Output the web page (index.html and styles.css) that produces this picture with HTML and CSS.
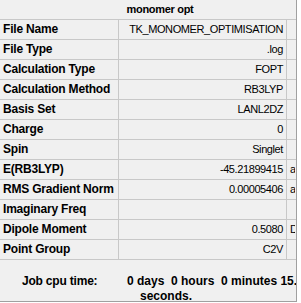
FILE: index.html
```html
<!DOCTYPE html>
<html lang="en">
<head>
  <meta charset="UTF-8">
  <title>monomer opt</title>
  <link rel="stylesheet" href="styles.css">
</head>
<body>
  <div class="panel">
    <div class="title">monomer opt</div>
    <div class="grid">
      <div class="row"><span class="label">File Name</span><span class="value">TK_MONOMER_OPTIMISATION</span><span class="unit"></span></div>
      <div class="row"><span class="label">File Type</span><span class="value">.log</span><span class="unit"></span></div>
      <div class="row"><span class="label">Calculation Type</span><span class="value">FOPT</span><span class="unit"></span></div>
      <div class="row"><span class="label">Calculation Method</span><span class="value">RB3LYP</span><span class="unit"></span></div>
      <div class="row"><span class="label">Basis Set</span><span class="value">LANL2DZ</span><span class="unit"></span></div>
      <div class="row"><span class="label">Charge</span><span class="value">0</span><span class="unit"></span></div>
      <div class="row"><span class="label">Spin</span><span class="value">Singlet</span><span class="unit"></span></div>
      <div class="row"><span class="label">E(RB3LYP)</span><span class="value">-45.21899415</span><span class="unit">a.u.</span></div>
      <div class="row"><span class="label">RMS Gradient Norm</span><span class="value">0.00005406</span><span class="unit">a.u.</span></div>
      <div class="row"><span class="label">Imaginary Freq</span><span class="value"></span><span class="unit"></span></div>
      <div class="row"><span class="label">Dipole Moment</span><span class="value">0.5080</span><span class="unit">Debye</span></div>
      <div class="row"><span class="label">Point Group</span><span class="value">C2V</span><span class="unit"></span></div>
    </div>
    <div class="footer">
      <span class="job-label">Job cpu time:</span>
      <span class="job-value">0 days&nbsp; 0 hours&nbsp; 0 minutes 15.0<br><span class="wrap">seconds.</span></span>
    </div>
  </div>
</body>
</html>
```

FILE: styles.css
```css
body {
  margin: 0;
  background: #ffffff;
}

.panel {
  width: 296px;
  height: 301px;
  background: #f0f0f0;
  border-right: 1px solid #a0a0a0;
  border-bottom: 1px solid #a0a0a0;
  overflow: hidden;
  font-family: "Liberation Sans", Arial, sans-serif;
  font-size: 11px;
  color: #000;
}

.title {
  height: 19px;
  line-height: 19px;
  padding-left: 24px;
  border-bottom: 1px solid #c8c8c8;
  text-align: center;
  font-weight: bold;
  letter-spacing: -0.3px;
}

.row {
  display: grid;
  grid-template-columns: 119px 168px 8px;
  height: 19px;
  line-height: 19px;
  border-bottom: 1px solid #c8c8c8;
}

.label {
  padding-left: 3px;
  font-weight: bold;
  font-size: 12px;
  letter-spacing: -0.2px;
  white-space: nowrap;
  border-right: 1px solid #c8c8c8;
}

.value {
  padding-right: 3px;
  text-align: right;
  white-space: nowrap;
  letter-spacing: -0.4px;
  overflow: hidden;
  border-right: 1px solid #c8c8c8;
}

.unit {
  padding-left: 3px;
  overflow: hidden;
  white-space: nowrap;
}

.footer {
  display: flex;
  padding-top: 14px;
  font-weight: bold;
  font-size: 12px;
  line-height: 15px;
}

.job-label {
  flex-shrink: 0;
  width: 127px;
  padding-left: 22px;
  box-sizing: border-box;
  letter-spacing: -0.2px;
  white-space: nowrap;
}

.job-value {
  flex-shrink: 0;
  white-space: nowrap;
}

.wrap {
  padding-left: 13px;
}
```
